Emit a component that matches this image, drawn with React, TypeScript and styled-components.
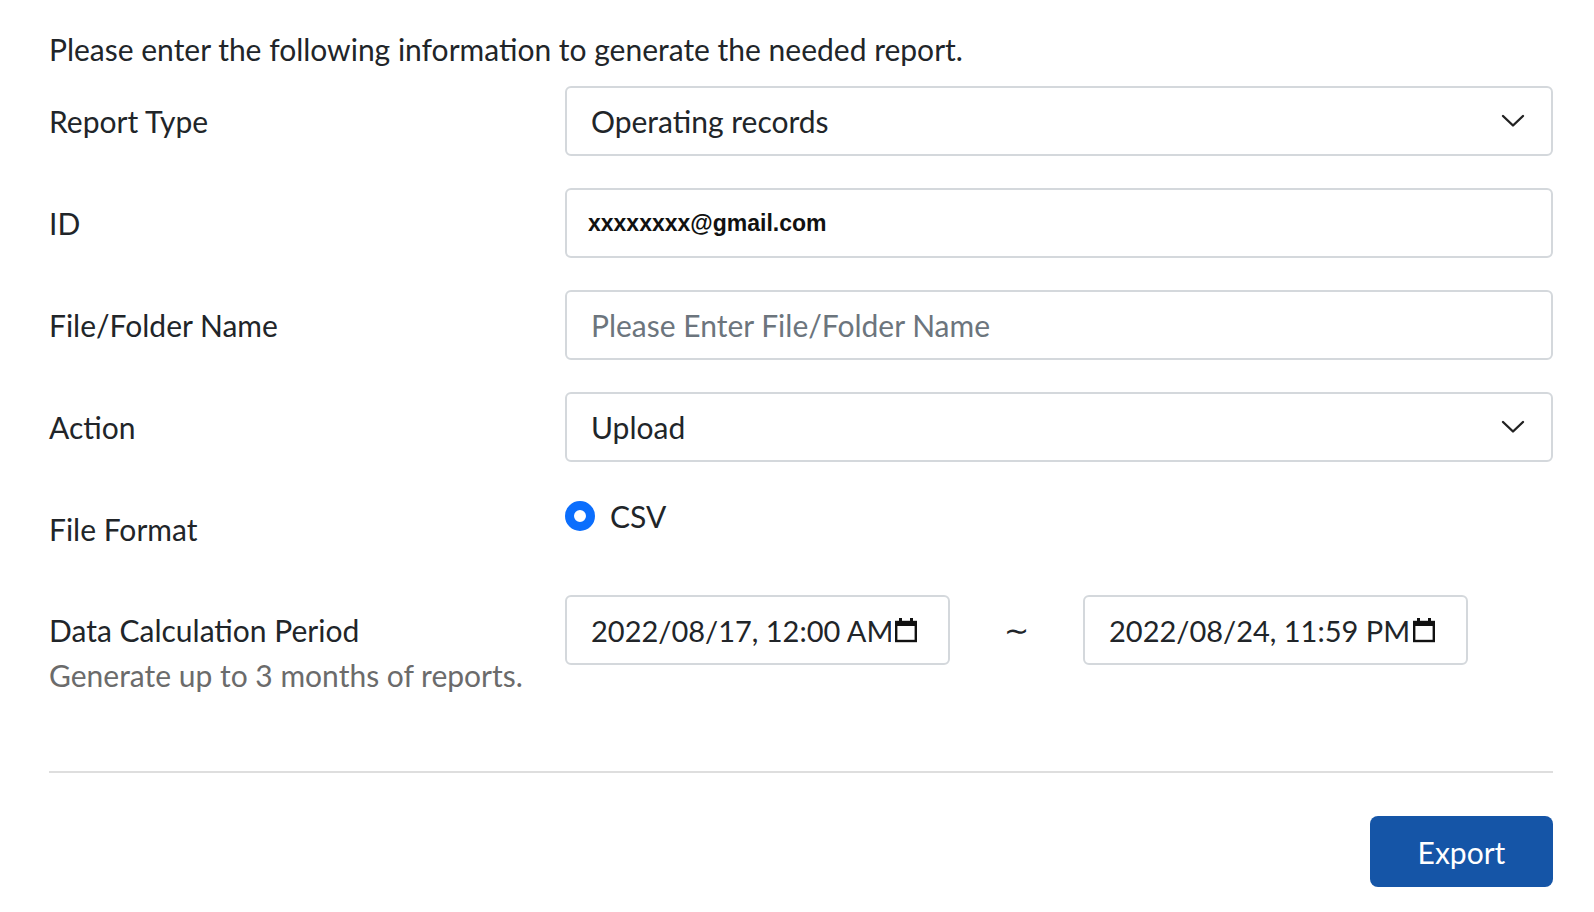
import React from "react";
import styled, { createGlobalStyle } from "styled-components";

const GlobalStyle = createGlobalStyle`
  body {
    margin: 0;
    background: #ffffff;
    font-family: Lato, "Noto Sans", sans-serif;
    color: #212529;
  }
`;

const Page = styled.div`
  padding: 28px 41px 0 49px;
`;

const Intro = styled.p`
  margin: 0 0 16px;
  font-size: 30px;
  line-height: 42px;
`;

const FormGrid = styled.div`
  display: grid;
  grid-template-columns: 516px 1fr;
  row-gap: 32px;
`;

const LabelCell = styled.div`
  padding-top: 14px;
`;

const Label = styled.div`
  font-size: 30px;
  line-height: 42px;
`;

const Hint = styled.div`
  margin-top: 3px;
  font-size: 30px;
  line-height: 42px;
  color: #6b6b6b;
`;

const FieldBox = styled.div`
  box-sizing: border-box;
  height: 70px;
  display: flex;
  align-items: center;
  justify-content: space-between;
  padding: 0 26px 0 24px;
  border: 2px solid #d4d8dc;
  border-radius: 6px;
  font-size: 30px;
  background: #fff;
`;

const TextInput = styled.input<{ $mono?: boolean }>`
  box-sizing: border-box;
  width: 100%;
  height: 70px;
  padding: ${(p) => (p.$mono ? "0 0 0 21px" : "0 0 0 24px")};
  border: 2px solid #d4d8dc;
  border-radius: 6px;
  outline: none;
  color: #111;
  font-family: ${(p) =>
    p.$mono ? `"Liberation Sans", Arial, sans-serif` : `Lato, sans-serif`};
  font-weight: ${(p) => (p.$mono ? 700 : 400)};
  font-size: ${(p) => (p.$mono ? "23px" : "30px")};
  &::placeholder {
    color: #6c757d;
  }
`;

const RadioCell = styled.div`
  height: 69px;
`;

const RadioOption = styled.label`
  display: flex;
  align-items: center;
  gap: 15px;
  height: 44px;
  font-size: 30px;
`;

const RadioDot = styled.span`
  box-sizing: border-box;
  width: 30px;
  height: 30px;
  border-radius: 50%;
  border: 9px solid #0b6efd;
  background: #fff;
`;

const DateRow = styled.div`
  display: flex;
  align-items: center;
  height: 70px;
`;

const DateBox = styled.div`
  box-sizing: border-box;
  width: 385px;
  height: 70px;
  display: flex;
  align-items: center;
  gap: 3px;
  padding: 0 30px 0 24px;
  border: 2px solid #d4d8dc;
  border-radius: 6px;
  font-size: 29px;
`;

const DateText = styled.span`
  flex: 1;
  overflow: hidden;
  white-space: nowrap;
`;

const Tilde = styled.span`
  width: 133px;
  text-align: center;
  font-family: "DejaVu Sans", sans-serif;
  font-size: 30px;
`;

const Divider = styled.hr`
  margin: 75px 0 43px;
  border: none;
  border-top: 2px solid #dedede;
`;

const Footer = styled.div`
  display: flex;
  justify-content: flex-end;
`;

const ExportButton = styled.button`
  width: 183px;
  height: 71px;
  border: none;
  border-radius: 8px;
  background: #1555a7;
  color: #fff;
  font-family: Lato, sans-serif;
  font-size: 30px;
  cursor: pointer;
`;

const Chevron = () => (
  <svg width="24" height="14" viewBox="0 0 24 14">
    <polyline
      points="2,2 12,11.5 22,2"
      fill="none"
      stroke="#222"
      strokeWidth="2.4"
      strokeLinecap="round"
      strokeLinejoin="round"
    />
  </svg>
);

const CalendarIcon = () => (
  <svg width="24" height="26" viewBox="0 0 24 26">
    <rect x="2.2" y="5" width="19.6" height="19" fill="none" stroke="#111" strokeWidth="2.4" />
    <rect x="1" y="4" width="22" height="5" fill="#111" />
    <rect x="5" y="1" width="3" height="4" fill="#111" />
    <rect x="16" y="1" width="3" height="4" fill="#111" />
  </svg>
);

export default function App() {
  return (
    <>
      <GlobalStyle />
      <Page>
        <Intro>Please enter the following information to generate the needed report.</Intro>
        <FormGrid>
          <LabelCell>
            <Label>Report Type</Label>
          </LabelCell>
          <FieldBox>
            <span>Operating records</span>
            <Chevron />
          </FieldBox>

          <LabelCell>
            <Label>ID</Label>
          </LabelCell>
          <TextInput $mono defaultValue="xxxxxxxx@gmail.com" />

          <LabelCell>
            <Label>File/Folder Name</Label>
          </LabelCell>
          <TextInput placeholder="Please Enter File/Folder Name" />

          <LabelCell>
            <Label>Action</Label>
          </LabelCell>
          <FieldBox>
            <span>Upload</span>
            <Chevron />
          </FieldBox>

          <LabelCell>
            <Label>File Format</Label>
          </LabelCell>
          <RadioCell>
            <RadioOption>
              <RadioDot />
              CSV
            </RadioOption>
          </RadioCell>

          <LabelCell>
            <Label>Data Calculation Period</Label>
            <Hint>Generate up to 3 months of reports.</Hint>
          </LabelCell>
          <DateRow>
            <DateBox>
              <DateText>2022/08/17, 12:00 AM</DateText>
              <CalendarIcon />
            </DateBox>
            <Tilde>∼</Tilde>
            <DateBox>
              <DateText>2022/08/24, 11:59 PM</DateText>
              <CalendarIcon />
            </DateBox>
          </DateRow>
        </FormGrid>
        <Divider />
        <Footer>
          <ExportButton>Export</ExportButton>
        </Footer>
      </Page>
    </>
  );
}
